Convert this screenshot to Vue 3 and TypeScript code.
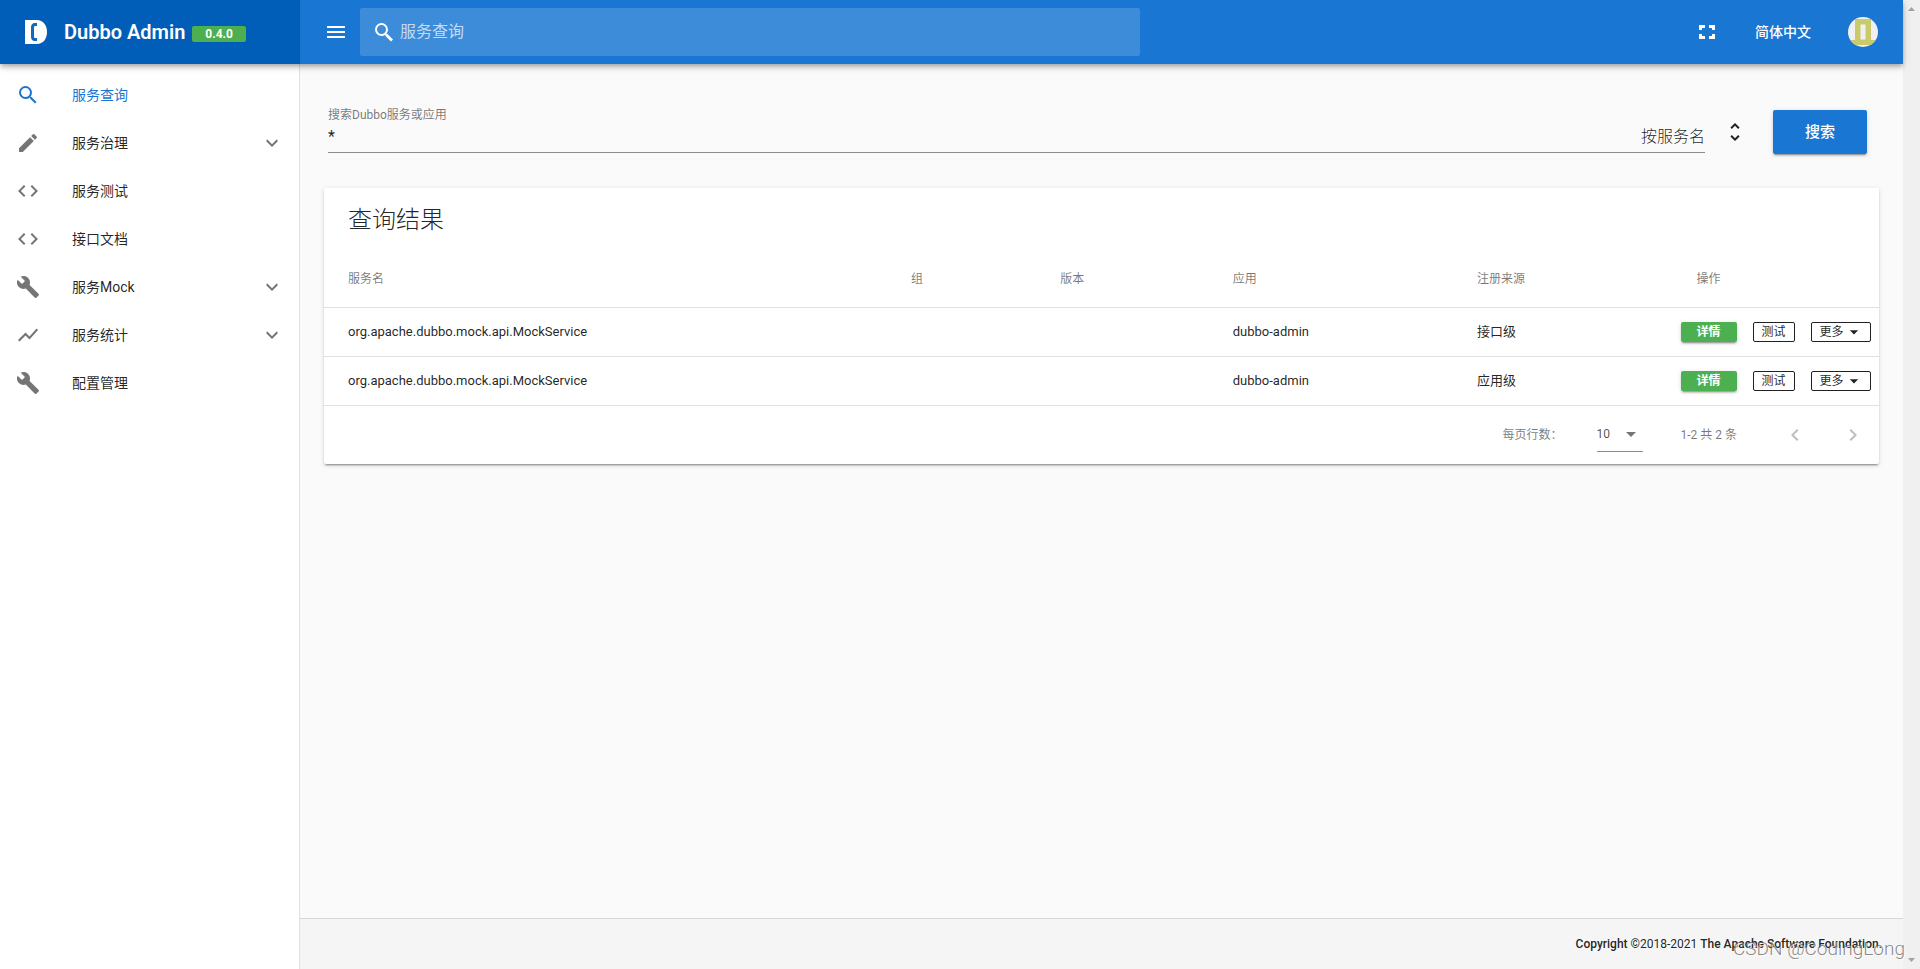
<script setup lang="ts">
import { ref } from 'vue'

interface NavItem {
  title: string
  icon: string
  active?: boolean
  group?: boolean
}

interface Service {
  id: number
  name: string
  group: string
  version: string
  app: string
  source: string
}

const icons: Record<string, string> = {
  search:
    'M15.5 14h-.79l-.28-.27A6.47 6.47 0 0 0 16 9.5 6.5 6.5 0 1 0 9.5 16c1.61 0 3.09-.59 4.23-1.57l.27.28v.79l5 4.99L20.49 19l-4.99-5zm-6 0C7.01 14 5 11.99 5 9.5S7.01 5 9.5 5 14 7.01 14 9.5 11.99 14 9.5 14z',
  edit: 'M3 17.25V21h3.75L17.81 9.94l-3.75-3.75L3 17.25zM20.71 7.04a1 1 0 0 0 0-1.41l-2.34-2.34a1 1 0 0 0-1.41 0l-1.83 1.83 3.75 3.75 1.83-1.83z',
  code: 'M9.4 16.6L4.8 12l4.6-4.6L8 6l-6 6 6 6 1.4-1.4zm5.2 0l4.6-4.6-4.6-4.6L16 6l6 6-6 6-1.4-1.4z',
  build:
    'M22.7 19l-9.1-9.1c.9-2.3.4-5-1.5-6.9-2-2-5-2.4-7.4-1.3L9 6 6 9 1.6 4.7C.4 7.1.9 10.1 2.9 12.1c1.9 1.9 4.6 2.4 6.9 1.5l9.1 9.1c.4.4 1 .4 1.4 0l2.3-2.3c.5-.4.5-1.1.1-1.4z',
  chart: 'M3.5 18.49l6-6.01 4 4L22 6.92l-1.41-1.41-7.09 7.97-4-4L2 16.99z',
  down: 'M7.41 8.59L12 13.17l4.59-4.58L18 10l-6 6-6-6z',
  menu: 'M3 18h18v-2H3v2zm0-5h18v-2H3v2zm0-7v2h18V6H3z',
  magnify:
    'M9.5 3A6.5 6.5 0 0 1 16 9.5c0 1.61-.59 3.09-1.56 4.23l.27.27h.79l5.5 5.5-2 2-5.5-5.5v-.79l-.27-.27A6.52 6.52 0 0 1 9.5 16a6.5 6.5 0 1 1 0-13m0 2a4.5 4.5 0 1 0 0 9 4.5 4.5 0 0 0 0-9z',
  fullscreen:
    'M4 5v5h3V8h3V5H4zm10 0v3h3v2h3V5h-6zM4 14v5h6v-3H7v-2H4zm13 0v2h-3v3h6v-5h-3z',
  unfold:
    'M12 5.83L15.17 9l1.41-1.41L12 3 7.41 7.59 8.83 9 12 5.83zm0 12.34L8.83 15l-1.41 1.41L12 21l4.59-4.59L15.17 15 12 18.17z',
  caret: 'M7 10l5 5 5-5z',
  left: 'M15.41 7.41L14 6l-6 6 6 6 1.41-1.41L10.83 12z',
  right: 'M10 6L8.59 7.41 13.17 12l-4.58 4.59L10 18l6-6z',
}

const navItems: NavItem[] = [
  { title: '服务查询', icon: 'search', active: true },
  { title: '服务治理', icon: 'edit', group: true },
  { title: '服务测试', icon: 'code' },
  { title: '接口文档', icon: 'code' },
  { title: '服务Mock', icon: 'build', group: true },
  { title: '服务统计', icon: 'chart', group: true },
  { title: '配置管理', icon: 'build' },
]

const services: Service[] = [
  { id: 1, name: 'org.apache.dubbo.mock.api.MockService', group: '', version: '', app: 'dubbo-admin', source: '接口级' },
  { id: 2, name: 'org.apache.dubbo.mock.api.MockService', group: '', version: '', app: 'dubbo-admin', source: '应用级' },
]

const globalQuery = ref('')
const filter = ref('*')
const searchType = ref('按服务名')
const rowsPerPage = ref('10')
</script>

<template>
  <div class="shell">
    <header class="topbar">
      <div class="brand">
        <svg class="logo" viewBox="0 0 22 24" aria-hidden="true">
          <path fill="#fff" d="M0 0h12c6 0 10 5 10 12s-4 12-10 12H0z" />
          <path fill="none" stroke="#1467bb" stroke-width="3" d="M12 4.500H10Q7.500 4.500 7.500 7.500v9Q7.500 19.500 10 19.500H12" />
        </svg>
        <span class="brand-name">Dubbo Admin</span>
        <span class="version">0.4.0</span>
      </div>
      <div class="tools">
        <button class="icon-btn" type="button" aria-label="菜单">
          <svg class="icon" viewBox="0 0 24 24"><path :d="icons.menu" /></svg>
        </button>
        <label class="global-search">
          <svg class="icon" viewBox="0 0 24 24"><path :d="icons.magnify" /></svg>
          <input v-model="globalQuery" type="text" placeholder="服务查询" aria-label="服务查询" />
        </label>
        <span class="spacer"></span>
        <button class="icon-btn" type="button" aria-label="全屏">
          <svg class="icon" viewBox="0 0 24 24"><path :d="icons.fullscreen" /></svg>
        </button>
        <button class="lang" type="button">简体中文</button>
        <button class="avatar" type="button" aria-label="用户">
          <svg viewBox="0 0 30 30">
            <path fill="#c9cb6b" fill-rule="evenodd" d="M7 2h16v21h7v5H0v-5h7zM12.500 7.500v15h5v-15z" />
          </svg>
        </button>
      </div>
    </header>

    <nav class="sidebar">
      <a v-for="item in navItems" :key="item.title" href="#" class="nav-item" :class="{ active: item.active }">
        <svg class="icon" viewBox="0 0 24 24"><path :d="icons[item.icon]" /></svg>
        <span class="nav-title">{{ item.title }}</span>
        <svg v-if="item.group" class="icon chevron" viewBox="0 0 24 24"><path :d="icons.down" /></svg>
      </a>
    </nav>

    <main class="content">
      <form class="search-row" @submit.prevent>
        <div class="field">
          <label for="filter">搜索Dubbo服务或应用</label>
          <div class="field-line">
            <input id="filter" v-model="filter" type="text" />
            <select v-model="searchType" aria-label="搜索类型">
              <option>按服务名</option>
              <option>按IP</option>
              <option>按应用</option>
            </select>
          </div>
        </div>
        <svg class="icon unfold" viewBox="0 0 24 24"><path :d="icons.unfold" /></svg>
        <button class="submit" type="submit">搜索</button>
      </form>

      <section class="card">
        <h1>查询结果</h1>
        <table>
          <colgroup>
            <col class="c-name" /><col class="c-group" /><col class="c-version" />
            <col class="c-app" /><col class="c-source" /><col class="c-ops" />
          </colgroup>
          <thead>
            <tr>
              <th>服务名</th>
              <th>组</th>
              <th>版本</th>
              <th>应用</th>
              <th>注册来源</th>
              <th class="ops-head">操作</th>
            </tr>
          </thead>
          <tbody>
            <tr v-for="s in services" :key="s.id">
              <td>{{ s.name }}</td>
              <td>{{ s.group }}</td>
              <td>{{ s.version }}</td>
              <td>{{ s.app }}</td>
              <td>{{ s.source }}</td>
              <td>
                <div class="ops">
                  <button class="op detail" type="button">详情</button>
                  <button class="op" type="button">测试</button>
                  <button class="op more" type="button">
                    更多
                    <svg class="icon small" viewBox="0 0 24 24"><path :d="icons.caret" /></svg>
                  </button>
                </div>
              </td>
            </tr>
          </tbody>
        </table>
        <div class="pager">
          <label for="rows">每页行数：</label>
          <div class="rows">
            <select id="rows" v-model="rowsPerPage">
              <option>10</option>
              <option>25</option>
            </select>
            <svg class="icon" viewBox="0 0 24 24"><path :d="icons.caret" /></svg>
          </div>
          <span class="range">1-2 共 2 条</span>
          <button class="icon-btn" type="button" aria-label="上一页" disabled>
            <svg class="icon" viewBox="0 0 24 24"><path :d="icons.left" /></svg>
          </button>
          <button class="icon-btn" type="button" aria-label="下一页" disabled>
            <svg class="icon" viewBox="0 0 24 24"><path :d="icons.right" /></svg>
          </button>
        </div>
      </section>
    </main>

    <footer class="footer">
      <span><b>Copyright</b> ©2018-2021 <b>The Apache Software Foundation.</b></span>
    </footer>

    <div class="scrollbar" aria-hidden="true">
      <svg viewBox="0 0 7 4"><path d="M0 4L3.500 0L7 4z" /></svg>
      <svg viewBox="0 0 7 4"><path d="M0 0L3.500 4L7 0z" /></svg>
    </div>
    <div class="watermark">CSDN @CodingLong</div>
  </div>
</template>

<style>
body {
  margin: 0;
}
</style>

<style scoped>
.shell {
  position: relative;
  display: grid;
  grid-template-columns: 300px minmax(0, 1fr) 17px;
  grid-template-rows: 64px 1fr auto;
  min-height: 100vh;
  background: #fafafa;
  color: rgba(0, 0, 0, 0.87);
  font-family: Roboto, 'Noto Sans CJK SC', sans-serif;
  font-size: 14px;
  line-height: 20px;
}
.shell * {
  box-sizing: border-box;
}
button,
input,
select {
  margin: 0;
  padding: 0;
  border: 0;
  outline: 0;
  background: none;
  color: inherit;
  font: inherit;
  appearance: none;
}
button,
select {
  cursor: pointer;
}
.icon {
  display: block;
  flex: none;
  width: 24px;
  height: 24px;
  fill: currentColor;
}
.icon.small {
  width: 20px;
  height: 20px;
}
.icon-btn {
  display: flex;
  align-items: center;
  justify-content: center;
  width: 36px;
  height: 36px;
}
.spacer {
  flex: 1;
}

.topbar {
  grid-column: 1 / 3;
  grid-row: 1;
  z-index: 2;
  display: flex;
  background: #1976d2;
  color: #fff;
  box-shadow: 0 2px 4px -1px rgba(0, 0, 0, 0.2), 0 4px 5px rgba(0, 0, 0, 0.14), 0 1px 10px rgba(0, 0, 0, 0.12);
}
.brand {
  display: flex;
  align-items: center;
  width: 300px;
  padding-left: 25px;
  background: #005eb8;
  border-right: 1px solid #0b56a4;
}
.logo {
  width: 22px;
  height: 24px;
}
.brand-name {
  margin-left: 17px;
  font-size: 20px;
  font-weight: 600;
}
.version {
  margin: 4px 0 0 7px;
  padding: 0 13px;
  border-radius: 2px;
  background: #4caf50;
  font-size: 12px;
  font-weight: 700;
  line-height: 16px;
}
.tools {
  flex: 1;
  display: flex;
  align-items: center;
  padding: 0 25px 0 18px;
}
.global-search {
  display: flex;
  align-items: center;
  width: 50%;
  height: 48px;
  margin-left: 6px;
  padding: 0 12px;
  border-radius: 2px;
  background: rgba(255, 255, 255, 0.16);
}
.global-search input {
  flex: 1;
  min-width: 0;
  margin-left: 4px;
  font-size: 16px;
}
.global-search input::placeholder {
  color: rgba(255, 255, 255, 0.7);
  opacity: 1;
}
.lang {
  margin: 0 37px 0 30px;
  font-weight: 500;
}
.avatar {
  width: 30px;
  height: 30px;
  overflow: hidden;
  border-radius: 50%;
  background: #f0f0f0;
}
.avatar svg {
  display: block;
}

.sidebar {
  grid-column: 1;
  grid-row: 2 / 4;
  padding-top: 7px;
  background: #fff;
  border-right: 1px solid #e0e0e0;
}
.nav-item {
  display: flex;
  align-items: center;
  height: 48px;
  padding: 0 15px 0 16px;
  color: inherit;
  text-decoration: none;
}
.nav-item .icon {
  color: #757575;
}
.nav-title {
  flex: 1;
  margin-left: 32px;
}
.nav-item.active,
.nav-item.active .icon {
  color: #1976d2;
}

.content {
  grid-column: 2;
  grid-row: 2;
  padding: 40px 24px 24px;
}
.search-row {
  display: flex;
  align-items: flex-start;
  padding: 0 12px 0 4px;
}
.field {
  flex: 1;
  padding-top: 3px;
}
.field > label {
  display: block;
  color: rgba(0, 0, 0, 0.54);
  font-size: 12px;
  line-height: 16px;
}
.field-line {
  display: flex;
  height: 30px;
  padding-bottom: 2px;
  border-bottom: 1px solid #8c8c8c;
  font-size: 16px;
}
.field-line input {
  flex: 1;
  min-width: 0;
}
.field-line select {
  width: 120px;
  font-weight: 300;
  text-align-last: right;
}
.unfold {
  margin: 16px 26px 0 18px;
}
.submit {
  width: 94px;
  height: 44px;
  margin-top: 6px;
  border-radius: 2px;
  background: #1976d2;
  color: #fff;
  font-size: 15px;
  font-weight: 500;
  box-shadow: 0 3px 1px -2px rgba(0, 0, 0, 0.2), 0 2px 2px rgba(0, 0, 0, 0.14), 0 1px 5px rgba(0, 0, 0, 0.12);
}

.card {
  margin-top: 34px;
  border-radius: 2px;
  background: #fff;
  box-shadow: 0 3px 1px -2px rgba(0, 0, 0, 0.2), 0 2px 2px rgba(0, 0, 0, 0.14), 0 1px 5px rgba(0, 0, 0, 0.12);
}
h1 {
  margin: 0;
  padding: 16px 24px;
  font-size: 24px;
  font-weight: 300;
  line-height: 32px;
}
table {
  width: 100%;
  table-layout: fixed;
  border-collapse: collapse;
}
.c-name {
  width: 36.2%;
}
.c-group {
  width: 9.6%;
}
.c-version {
  width: 11.1%;
}
.c-app {
  width: 15.7%;
}
.c-source {
  width: 13.1%;
}
th,
td {
  height: 49px;
  padding: 0 0 0 24px;
  border-bottom: 1px solid #e0e0e0;
  text-align: left;
  font-size: 13px;
  font-weight: 400;
}
th {
  height: 55px;
  color: rgba(0, 0, 0, 0.54);
  font-size: 12px;
}
.ops-head {
  padding-left: 40px;
}
.ops {
  display: flex;
  gap: 16px;
}
.op {
  display: flex;
  align-items: center;
  justify-content: center;
  width: 42px;
  height: 20px;
  border: 1px solid #212121;
  border-radius: 2px;
  font-size: 12px;
}
.op.detail {
  width: 56px;
  border: 0;
  background: #4caf50;
  color: #fff;
  font-weight: 700;
  box-shadow: 0 3px 1px -2px rgba(0, 0, 0, 0.2), 0 2px 2px rgba(0, 0, 0, 0.14), 0 1px 5px rgba(0, 0, 0, 0.12);
}
.op.more {
  justify-content: flex-start;
  width: 60px;
  padding-left: 8px;
}
.pager {
  display: flex;
  align-items: center;
  justify-content: flex-end;
  height: 58px;
  padding-right: 8px;
  color: rgba(0, 0, 0, 0.54);
  font-size: 12px;
}
.rows {
  display: flex;
  align-items: center;
  width: 46px;
  height: 34px;
  margin: 0 38px 0 34px;
  border-bottom: 1px solid #8c8c8c;
}
.rows select {
  width: 22px;
  color: rgba(0, 0, 0, 0.7);
}
.range {
  margin-right: 40px;
}
.pager .icon-btn {
  color: rgba(0, 0, 0, 0.26);
}
.pager .icon-btn + .icon-btn {
  margin-left: 22px;
}

.footer {
  grid-column: 2;
  grid-row: 3;
  display: flex;
  align-items: center;
  justify-content: flex-end;
  height: 51px;
  padding-right: 21px;
  border-top: 1px solid #d8d8d8;
  background: #f5f5f5;
  font-size: 12px;
}
.footer b {
  font-weight: 500;
}
.scrollbar {
  grid-column: 3;
  grid-row: 1 / 4;
  display: flex;
  flex-direction: column;
  align-items: center;
  justify-content: space-between;
  padding: 7px 0;
  background: #f0f0f0;
}
.scrollbar svg {
  width: 7px;
  height: 4px;
  fill: #a3a3a3;
}
.watermark {
  position: absolute;
  right: 15px;
  bottom: 8px;
  z-index: 3;
  color: rgba(100, 100, 100, 0.75);
  font-size: 19px;
  font-weight: 300;
  line-height: 24px;
  text-shadow: 1px 1px 0 rgba(255, 255, 255, 0.8);
}
</style>
